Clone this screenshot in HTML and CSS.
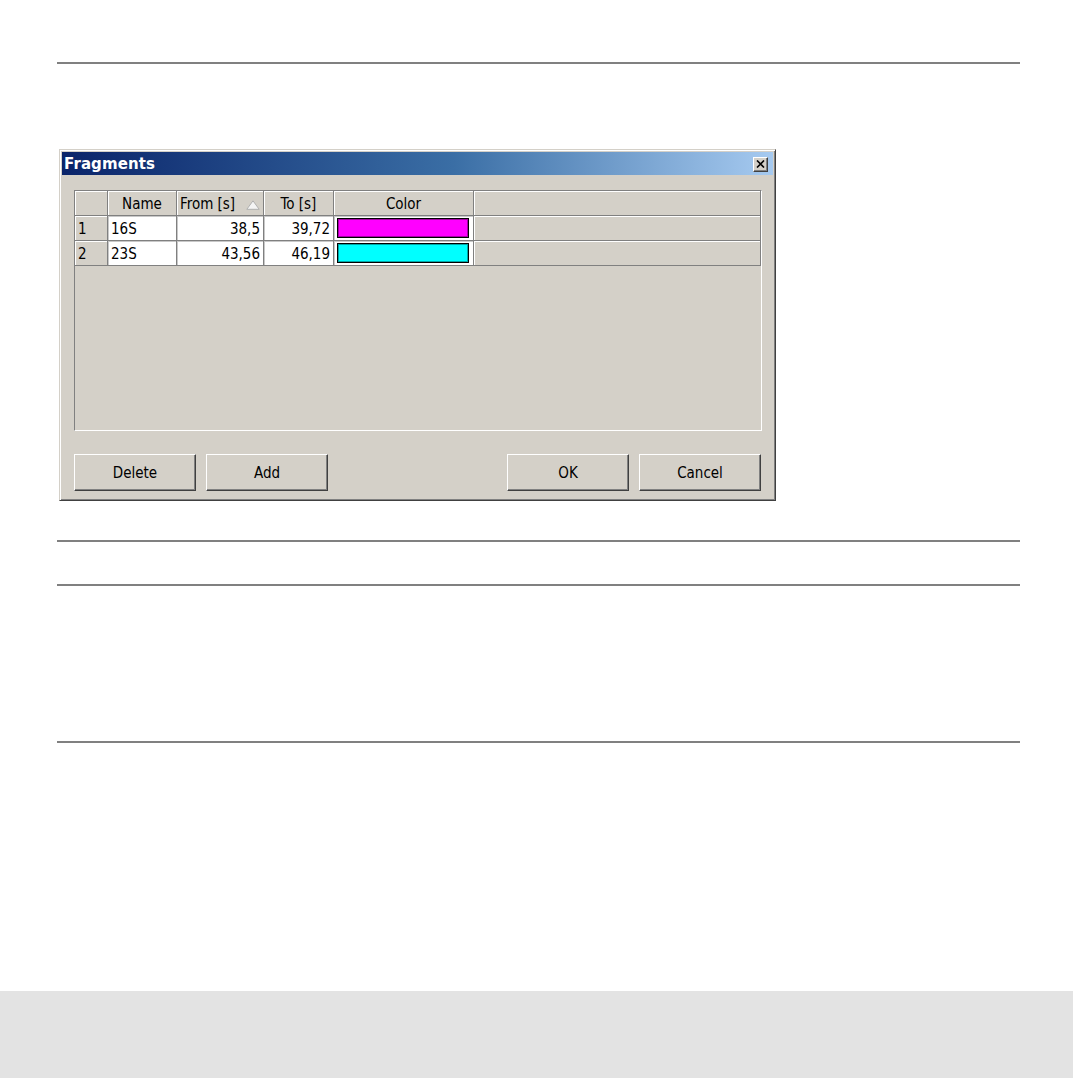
FILE: index.html
```html
<!DOCTYPE html>
<html>
<head>
<meta charset="utf-8">
<link rel="stylesheet" href="styles.css">
</head>
<body>
<div class="page">
  <div class="rule rule-top"></div>
  <div class="dialog">
    <div class="titlebar">
      <span class="title">Fragments</span>
      <span class="close">
        <svg width="9" height="8" viewBox="0 0 9 8"><path d="M1 0.5 L8 7.5 M8 0.5 L1 7.5" stroke="#000" stroke-width="1.6"/></svg>
      </span>
    </div>
    <div class="body">
      <div class="gridbox">
        <div class="grid">
          <div class="cell hdr"></div>
          <div class="cell hdr center">Name</div>
          <div class="cell hdr sort"><span>From [s]</span>
            <svg class="tri" width="14" height="10" viewBox="0 0 14 10"><path d="M7 0.8 L13.2 9.3 L0.8 9.3 Z" fill="#f4f4f4" stroke="#b0b0b0" stroke-width="1"/></svg>
          </div>
          <div class="cell hdr center">To [s]</div>
          <div class="cell hdr center">Color</div>
          <div class="cell hdr"></div>

          <div class="cell hdr left">1</div>
          <div class="cell data">16S</div>
          <div class="cell data right">38,5</div>
          <div class="cell data right">39,72</div>
          <div class="cell data swatchcell"><div class="swatch magenta"></div></div>
          <div class="cell hdr"></div>

          <div class="cell hdr left">2</div>
          <div class="cell data">23S</div>
          <div class="cell data right">43,56</div>
          <div class="cell data right">46,19</div>
          <div class="cell data swatchcell"><div class="swatch cyan"></div></div>
          <div class="cell hdr"></div>
        </div>
      </div>
      <div class="buttons">
        <button class="btn">Delete</button>
        <button class="btn">Add</button>
        <button class="btn push">OK</button>
        <button class="btn">Cancel</button>
      </div>
    </div>
  </div>
  <div class="rule rule-a"></div>
  <div class="rule rule-b"></div>
  <div class="rule rule-c"></div>
</div>
<div class="footer"></div>
</body>
</html>
```
FILE: styles.css
```css
html, body {
  margin: 0;
  padding: 0;
  background: #fff;
}
body {
  width: 1076px;
  height: 1078px;
  position: relative;
  overflow: hidden;
  font-family: "DejaVu Sans Condensed", "DejaVu Sans", sans-serif;
}
.page {
  padding-left: 57px;
  padding-top: 62px;
  width: 963px;
  height: 929px;
}
.rule {
  height: 2px;
  background: #808080;
  width: 963px;
}
.rule-a { margin-top: 39px; }
.rule-b { margin-top: 42px; }
.rule-c { margin-top: 155px; }

.dialog {
  margin-top: 85px;
  margin-left: 2px;
  width: 717px;
  height: 352px;
  box-sizing: border-box;
  background: #d4d0c8;
  border-top: 1px solid #d4d0c8;
  border-left: 1px solid #d4d0c8;
  border-right: 1px solid #404040;
  border-bottom: 1px solid #404040;
  box-shadow: inset 1px 1px 0 #fff, inset -1px -1px 0 #808080;
  padding: 2px;
  display: flex;
  flex-direction: column;
}
.titlebar {
  height: 23px;
  background: linear-gradient(to right, #0a246a 0%, #3a6ea5 55%, #a6caf0 100%);
  display: flex;
  align-items: center;
  padding: 0 5px 0 2px;
}
.title {
  font-family: "DejaVu Sans", Verdana, sans-serif;
  font-weight: bold;
  font-size: 15px;
  color: #fff;
  letter-spacing: 0.1px;
}
.close {
  margin-left: auto;
  width: 15px;
  height: 15px;
  box-sizing: border-box;
  background: #d4d0c8;
  border-top: 1px solid #fff;
  border-left: 1px solid #fff;
  border-right: 1px solid #404040;
  border-bottom: 1px solid #404040;
  box-shadow: inset -1px -1px 0 #808080;
  display: flex;
  align-items: center;
  justify-content: center;
  margin-top: 1px;
}
.body {
  padding: 15px 11px 7px 12px;
  display: flex;
  flex-direction: column;
}
.gridbox {
  height: 241px;
  box-sizing: border-box;
  border-top: 1px solid #808080;
  border-left: 1px solid #808080;
  border-right: 1px solid #fff;
  border-bottom: 1px solid #fff;
}
.grid {
  display: grid;
  grid-template-columns: 33px 69px 87px 70px 140px 1fr;
  grid-auto-rows: 25px;
}
.cell {
  box-sizing: border-box;
  border-right: 1px solid #808080;
  border-bottom: 1px solid #808080;
  font-size: 15px;
  color: #000;
  display: flex;
  align-items: center;
  padding: 1px 3px 0 3px;
  white-space: nowrap;
}
.hdr {
  background: #d4d0c8;
  box-shadow: inset 1px 1px 0 #fff;
}
.data {
  background: #fff;
  box-shadow: inset 1px 1px 0 #c8c8c8;
}
.center { justify-content: center; }
.right { justify-content: flex-end; padding-right: 3px; }
.left { justify-content: flex-start; }
.sort { padding: 1px 0 0 3px; }
.tri { flex-shrink: 0; margin-left: 11px; margin-top: 2px; }
.swatchcell { padding: 2px 4px 2px 3px; align-items: stretch; }
.swatch {
  flex: 1;
  box-sizing: border-box;
  border: 1px solid #000;
  box-shadow: inset 0 0 0 1px rgba(0,0,0,0.35);
}
.magenta { background: #ff00ff; }
.cyan { background: #00ffff; }

.buttons {
  margin-top: 23px;
  display: flex;
  gap: 10px;
  padding-right: 1px;
}
.btn {
  width: 122px;
  height: 37px;
  box-sizing: border-box;
  background: #d4d0c8;
  border-top: 1px solid #fff;
  border-left: 1px solid #fff;
  border-right: 1px solid #404040;
  border-bottom: 1px solid #404040;
  box-shadow: inset -1px -1px 0 #808080;
  font-family: "DejaVu Sans Condensed", "DejaVu Sans", sans-serif;
  font-size: 15px;
  color: #000;
  padding: 0;
}
.push { margin-left: auto; }

.footer {
  position: absolute;
  left: 0;
  top: 991px;
  width: 1073px;
  height: 87px;
  background: #e3e3e3;
}
```
